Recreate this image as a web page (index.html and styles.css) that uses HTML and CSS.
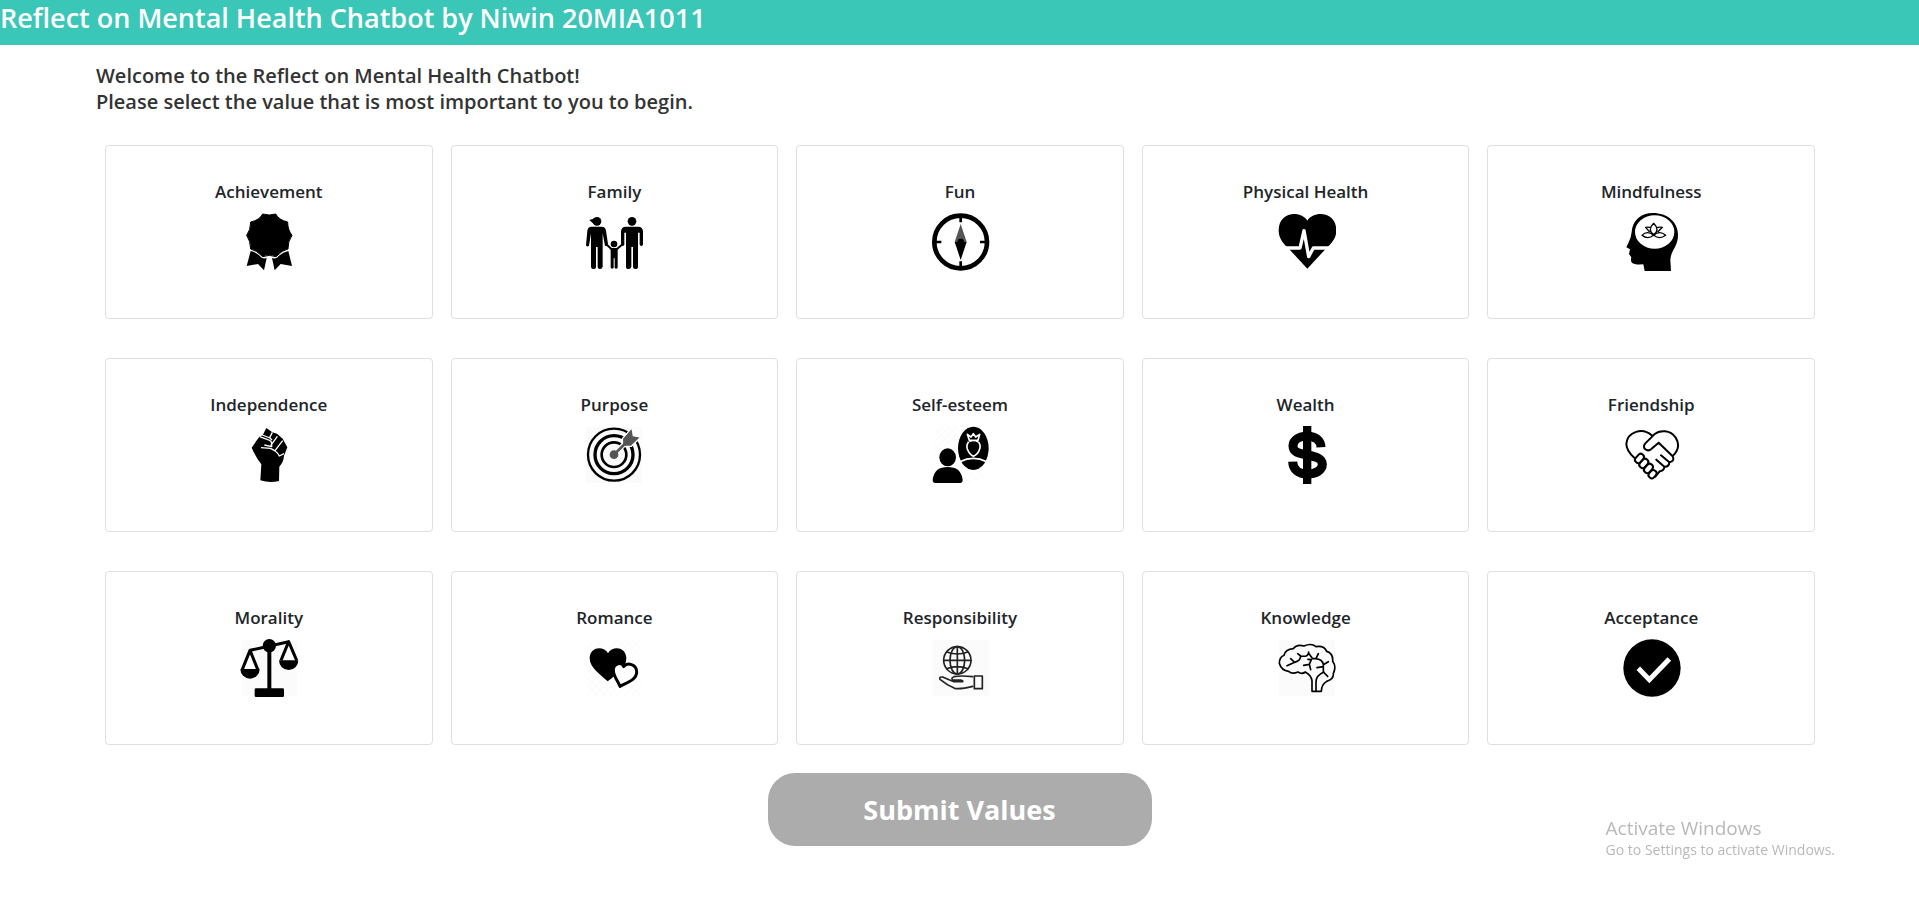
FILE: index.html
```html
<!DOCTYPE html>
<html lang="en">
<head>
<meta charset="utf-8">
<title>Reflect on Mental Health Chatbot</title>
<link rel="stylesheet" href="styles.css">
</head>
<body>
<header class="header"><h1 class="header-title">Reflect on Mental Health Chatbot by Niwin 20MIA1011</h1></header>
<main class="main">
<p class="intro">Welcome to the Reflect on Mental Health Chatbot!<br>Please select the value that is most important to you to begin.</p>
<div class="values">
<button type="button" class="card"><span class="card-title">Achievement</span>
<svg class="icon" viewBox="56 36 180 180"><path stroke="#000" stroke-width="3" stroke-linejoin="round" d="M127 42Q147 48 166 42Q176 60 202 66Q202 90 215 106Q202 124 203 147Q186 150 167 170Q147 162 127 170Q108 150 91 147Q91 124 79 106Q91 90 91 66Q118 60 127 42Z"/><path d="M91 153Q108 156 124 173Q131 177 139 174L131 211L113 192L79 198ZM204 153Q186 156 170 173Q162 177 155 174L163 211L181 192L215 198Z"/></svg></button>
<button type="button" class="card"><span class="card-title">Family</span>
<svg class="icon" viewBox="1092 36 180 180"><circle cx="1131" cy="64" r="13"/><path d="M1108 60L1128 54L1124 74Z"/><circle cx="1236" cy="64" r="13"/><circle cx="1182" cy="132" r="10"/><path d="M1114 80H1146Q1156 80 1158 92L1164 132Q1162 140 1155 137L1148 100V200Q1147 207 1140 207Q1133 207 1133 200V141H1128V200Q1128 207 1120 207Q1113 207 1113 200V100L1107 137Q1100 142 1098 136L1102 92Q1104 80 1114 80ZM1217 80H1255Q1268 80 1269 94V134Q1264 142 1259 134V98H1254V200Q1254 207 1246 207Q1239 207 1239 200V141H1234V200Q1233 207 1226 207Q1218 207 1218 200V98H1213V134Q1208 142 1203 134V94Q1204 80 1217 80Z"/><path d="M1162 136L1174 147H1191L1204 136" fill="none" stroke="#000" stroke-width="6" stroke-linecap="round"/><path d="M1172 146H1193V203Q1188 209 1184 203V175H1181V203Q1177 209 1172 203Z"/></svg></button>
<button type="button" class="card"><span class="card-title">Fun</span>
<svg class="icon" viewBox="58 36 180 180"><circle cx="150" cy="126" r="79" fill="none" stroke="#000" stroke-width="14"/><path fill="none" stroke="#000" stroke-width="8" d="M150 52V67M150 184V200M76 126H92M208 126H224"/><path fill="#555" d="M150 72L168 126H132Z"/><path d="M132 126H168L150 180Z"/><circle cx="150" cy="126" r="10"/></svg></button>
<button type="button" class="card"><span class="card-title">Physical Health</span>
<svg class="icon" viewBox="1094 36 180 180"><path d="M1188 62C1170 32 1102 32 1102 92C1102 118 1120 134 1136 150L1188 206L1240 150C1256 134 1275 118 1275 92C1275 32 1206 32 1188 62Z"/><path fill="none" stroke="#fff" stroke-width="10" d="M1112 144H1166L1178 92L1192 170L1206 144H1266" stroke-linejoin="round"/></svg></button>
<button type="button" class="card"><span class="card-title">Mindfulness</span>
<svg class="icon" viewBox="60 36 180 180"><path d="M92 96C94 60 122 39 155 39C200 39 231 66 231 105C231 140 209 152 208 180L210 213H131L127 193Q100 195 93 188Q88 182 91 172L84 162L87 148L76 142Q84 126 89 112Z"/><ellipse cx="161" cy="96" rx="59" ry="50" fill="#fff"/><path fill="none" stroke="#000" stroke-width="4" stroke-linejoin="round" d="M158 104Q138 90 158 70Q178 90 158 104ZM146 96L134 82Q146 80 151 85M170 96L184 82Q172 80 165 85M158 106Q138 90 123 106Q140 120 158 106Q176 90 194 106Q176 120 158 106"/></svg></button>
<button type="button" class="card"><span class="card-title">Independence</span>
<svg class="icon" viewBox="56 30 180 180"><path d="M94 98L117 65L127 61L138 39L156 52L170 56L187 71L201 97L191 122Q190 140 177 155L176 198Q148 205 120 196L123 148Q106 126 94 98Z"/><path fill="none" stroke="#fff" stroke-width="4" stroke-linejoin="round" d="M126 60L149 69M156 52L148 68L155 75M171 64L151 92M187 77L164 107M118 65L142 74Q154 77 154 86V95L132 90M122 98L150 100Q170 108 177 123L191 116"/></svg></button>
<button type="button" class="card"><span class="card-title">Purpose</span>
<svg class="icon" viewBox="1092 30 180 180"><path class="backing" d="M1098 36H1266V204H1098Z"/><g fill="none" stroke="#000"><circle cx="1182" cy="119" r="78" stroke-width="7"/><circle cx="1182" cy="119" r="57" stroke-width="10"/><circle cx="1182" cy="119" r="37" stroke-width="8"/></g><path stroke="#fff" stroke-width="16" d="M1190 111L1216 84"/><path fill="#555" stroke="#fff" stroke-width="4" d="M1208 94L1207 71L1236 38L1240 62L1263 66L1234 94Z"/><path stroke="#555" stroke-width="8" d="M1182 119L1214 87"/><circle cx="1182" cy="119" r="13" fill="#555"/></svg></button>
<button type="button" class="card"><span class="card-title">Self-esteem</span>
<svg class="icon" viewBox="58 30 180 180"><path class="checks" d="M70 60L92 38M70 82L114 38M70 104L136 38M70 126L150 46M156 180L180 204M176 172L208 204M200 168L234 202M70 38L142 110M92 38L142 88M114 38L142 66"/><ellipse cx="111" cy="127" rx="25" ry="27"/><path d="M66 195C69 166 86 156 111 156S153 166 156 195Q156 204 148 204H74Q66 204 66 195Z"/><ellipse cx="188" cy="100" rx="46" ry="65"/><g fill="none" stroke="#fff" stroke-width="5" stroke-linejoin="round"><path d="M176 76L170 58L181 66L188 56L195 66L207 58L202 76ZM174 80Q166 90 170 102Q176 118 188 124Q202 118 207 102Q211 90 203 80M176 80Q188 72 202 80M148 140Q188 120 228 140"/></g></svg></button>
<button type="button" class="card"><span class="card-title">Wealth</span>
<svg class="icon" viewBox="1094 30 180 180"><path fill="none" stroke="#000" stroke-width="27" d="M1229 97C1228 76 1214 64 1188 64C1162 64 1145 75 1145 93C1145 113 1165 115 1188 120C1213 125 1233 129 1233 148C1233 166 1214 177 1188 177C1161 177 1145 164 1144 140"/><path d="M1175 33H1200V207H1175Z"/></svg></button>
<button type="button" class="card"><span class="card-title">Friendship</span>
<svg class="icon" viewBox="60 30 180 180"><g fill="none" stroke="#000" stroke-width="6" stroke-linecap="round" stroke-linejoin="round"><path d="M100 128C84 114 76 102 76 86C80 50 124 36 152 61M131 101Q126 93 133 85L160 58C176 44 208 44 224 68C238 90 228 110 216 122M131 101Q139 110 150 103L173 83L215 124Q222 138 205 142M180 121L205 142Q204 156 190 155M166 134L190 155Q189 168 176 169M176 169L163 185"/><rect x="100" y="121" width="30" height="19" rx="9" transform="rotate(-48 115 130)"/><rect x="113" y="136" width="30" height="19" rx="9" transform="rotate(-48 128 145)"/><rect x="127" y="151" width="30" height="19" rx="9" transform="rotate(-48 142 160)"/><rect x="142" y="168" width="26" height="19" rx="9" transform="rotate(-48 155 178)"/></g></svg></button>
<button type="button" class="card"><span class="card-title">Morality</span>
<svg class="icon" viewBox="56 36 180 180"><path class="backing" d="M64 42H230V210H64Z"/><path fill="#fff" d="M89 72L111 130H68ZM205 47L227 103H184Z"/><rect x="103" y="187" width="88" height="26" rx="4"/><circle cx="147" cy="59" r="20"/><path fill="none" stroke="#000" stroke-width="9" stroke-linejoin="round" d="M66 130L89 73L112 130M182 103L205 47L229 103M89 73L205 47"/><path stroke="#000" stroke-width="12" d="M147 60V190"/><path d="M60 129H118A29 29 0 0 1 60 129ZM176 103H234A29 29 0 0 1 176 103Z"/></svg></button>
<button type="button" class="card"><span class="card-title">Romance</span>
<svg class="icon" viewBox="1092 36 180 180"><path class="checks" d="M1102 66L1124 44M1102 88L1146 44M1168 66L1190 44M1190 66L1212 44M1212 66L1234 44M1222 80L1258 44M1240 86L1264 62M1102 140L1116 126M1102 162L1128 136M1102 184L1140 146M1102 206L1152 156M1124 208L1172 160M1146 208L1180 174M1168 208L1188 188M1190 208L1264 134M1212 208L1264 156M1234 208L1264 178M1102 110L1180 188M1102 132L1178 208M1102 154L1156 208M1102 176L1134 208M1216 44L1264 92M1238 44L1264 70M1194 44L1240 90M1128 44L1150 66M1240 160L1264 184M1222 170L1260 208"/><path d="M1164 82C1151 58 1109 62 1109 97C1109 125 1140 145 1163 166C1190 145 1219 125 1219 97C1219 62 1177 58 1164 82Z"/><path fill="#fff" stroke="#000" stroke-width="9" stroke-linejoin="round" d="M1211 122C1222 108 1250 114 1250 138C1250 162 1220 170 1200 181C1193 162 1179 150 1180 130C1182 112 1206 106 1211 122Z"/></svg></button>
<button type="button" class="card"><span class="card-title">Responsibility</span>
<svg class="icon" viewBox="58 36 180 180"><path class="backing" d="M66 42H234V210H66Z"/><g fill="none" stroke="#222" stroke-width="5" stroke-linecap="round" stroke-linejoin="round"><circle cx="140" cy="103" r="41"/><ellipse cx="140" cy="103" rx="22" ry="41"/><path d="M140 62V144M99 103H181M108 78Q140 90 172 78M108 128Q140 116 172 128M186 152Q150 148 130 152Q120 156 126 162H150Q158 164 156 167H130Q116 162 96 153Q84 152 88 160Q110 178 132 187Q150 190 186 181"/><path d="M191 150H215V188H191Z"/></g></svg></button>
<button type="button" class="card"><span class="card-title">Knowledge</span>
<svg class="icon" viewBox="1094 36 180 180"><path class="backing" d="M1103 42H1271V210H1103Z"/><g fill="none" stroke="#000" stroke-width="5" stroke-linecap="round" stroke-linejoin="round"><path d="M1202 196V164Q1200 148 1182 138Q1172 146 1160 138Q1142 146 1132 136Q1110 134 1104 112Q1104 94 1118 88Q1122 70 1146 68Q1156 54 1178 60Q1200 50 1214 62Q1238 58 1246 76Q1266 82 1264 106Q1276 122 1266 142Q1268 160 1246 166Q1230 176 1230 196ZM1214 194V168Q1214 148 1238 138M1127 119L1150 109Q1168 104 1168 90L1159 83M1150 109L1138 98M1168 90Q1192 94 1192 78M1192 82L1204 98L1214 98L1221 83M1212 98Q1234 100 1236 116V138L1249 151M1236 116L1251 107M1236 122L1217 125M1198 131L1194 115L1177 118M1194 115L1200 101L1190 100"/></g></svg></button>
<button type="button" class="card"><span class="card-title">Acceptance</span>
<svg class="icon" viewBox="60 36 180 180"><circle cx="153" cy="126" r="86"/><path fill="none" stroke="#fff" stroke-width="15" stroke-linejoin="miter" d="M112 127L145 161L205 99"/></svg></button>
</div>
<button type="submit" class="submit">Submit Values</button>
</main>
<aside class="watermark"><p class="watermark-title">Activate Windows</p><p class="watermark-text">Go to Settings to activate Windows.</p></aside>
</body>
</html>
```
FILE: styles.css
```css
* { box-sizing: border-box; }
body {
  margin: 0;
  background: #fff;
  color: #212529;
  font-family: "Open Sans", "Noto Sans", sans-serif;
}
.header {
  padding-bottom: 9px;
  background: #3ac7b8;
}
.header-title {
  margin: 0;
  color: #fff;
  font-size: 27px;
  font-weight: 600;
  line-height: 36px;
}
.main {
  width: 90%;
  margin: 0 auto;
  padding-top: 18px;
}
.intro {
  margin: 0;
  color: #333;
  font-size: 20px;
  font-weight: 600;
  line-height: 26px;
}
.values {
  display: grid;
  grid-template-columns: repeat(5, 1fr);
  gap: 39px 18px;
  padding: 30px 8px 28px 9px;
}
.card {
  display: flex;
  flex-direction: column;
  align-items: center;
  gap: 8px;
  padding: 34px 16px 46px;
  border: 1px solid #dfdfdf;
  border-radius: 4px;
  background: #fff;
  color: #212529;
  font-family: inherit;
  cursor: pointer;
}
.card-title {
  font-size: 17px;
  font-weight: 600;
  line-height: 24px;
}
.icon {
  width: 60px;
  height: 60px;
}
.backing { fill: #fbfbfb; }
.checks {
  fill: none;
  stroke: #f4f4f4;
  stroke-width: 2px;
}
.submit {
  display: block;
  width: 384px;
  margin: 0 auto;
  padding: 16px;
  border: 0;
  border-radius: 27px;
  background: #acacac;
  color: #fff;
  font-family: inherit;
  font-size: 27px;
  font-weight: 700;
  line-height: 41px;
}
.watermark {
  position: fixed;
  right: 84px;
  bottom: 48px;
  color: #b9b9b9;
}
.watermark-title {
  margin: 0;
  font-size: 19px;
  line-height: 24px;
}
.watermark-text {
  margin: 0;
  font-size: 14px;
  line-height: 20px;
}
```
